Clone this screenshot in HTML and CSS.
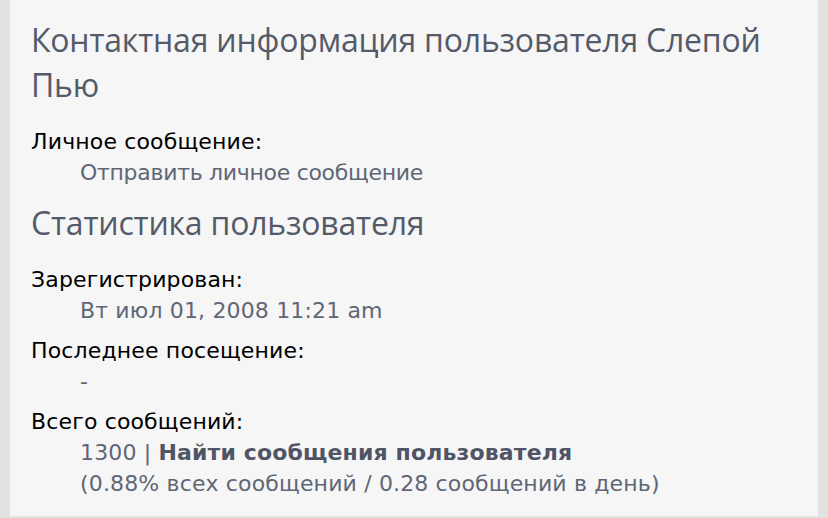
FILE: index.html
```html
<!DOCTYPE html>
<html lang="ru">
<head>
<meta charset="utf-8">
<link rel="stylesheet" href="styles.css">
</head>
<body>
<div class="panel">
  <h3 class="title">Контактная информация пользователя Слепой Пью</h3>
  <dl class="info">
    <dt>Личное сообщение:</dt>
    <dd><a class="link">Отправить личное сообщение</a></dd>
  </dl>
  <h3 class="title title-stats">Статистика пользователя</h3>
  <dl class="info">
    <dt>Зарегистрирован:</dt>
    <dd>Вт июл 01, 2008 11:21 am</dd>
    <dt>Последнее посещение:</dt>
    <dd>-</dd>
    <dt>Всего сообщений:</dt>
    <dd>1300 | <strong class="strong-link">Найти сообщения пользователя</strong><br>(0.88% всех сообщений / 0.28 сообщений в день)</dd>
  </dl>
</div>
</body>
</html>
```
FILE: styles.css
```css
html, body {
  margin: 0;
  padding: 0;
}
body {
  background: #e2e2e2;
  font-family: "DejaVu Sans", Verdana, sans-serif;
  height: 518px;
  overflow: hidden;
}
.panel {
  margin: 0 10px;
  background: #f6f6f6;
  height: 516px;
  padding: 17px 21px 0 21px;
  box-sizing: border-box;
}
.title {
  margin: 0;
  font-family: "Open Sans", sans-serif;
  font-weight: normal;
  font-size: 32px;
  letter-spacing: -0.2px;
  line-height: 45px;
  color: #545a69;
}
.title-stats {
  margin-top: 12px;
}
.info {
  margin: 19px 0 0 0;
  font-size: 22px;
  letter-spacing: 0.15px;
  line-height: 31px;
}
.info dt {
  color: #000;
  margin: 0;
}
.info dd {
  margin: 0 0 9px 49px;
  color: #5f6675;
}
.link {
  color: #5f6675;
  letter-spacing: -0.3px;
}
.strong-link {
  color: #4f5566;
}
```
